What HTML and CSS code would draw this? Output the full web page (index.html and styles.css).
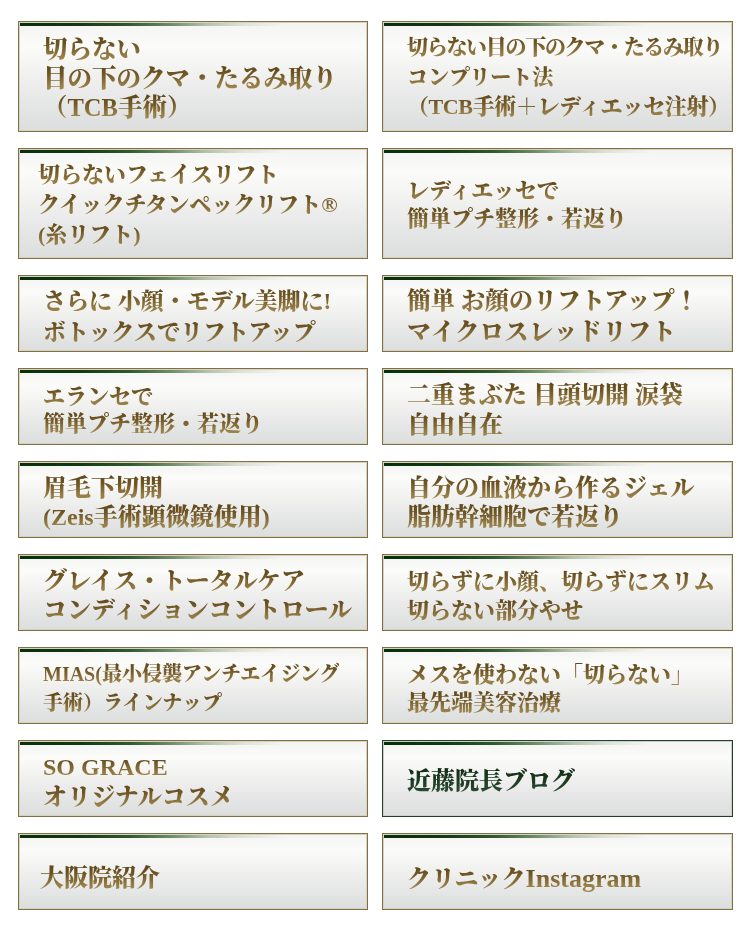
FILE: index.html
```html
<!DOCTYPE html>
<html lang="ja">
<head>
<meta charset="utf-8">
<title>メニュー</title>
<link rel="stylesheet" href="styles.css">
</head>
<body>
<div class="menu">
  <a class="btn tall" href="#"><span class="label s245">切らない<br>目の下のクマ・たるみ取り<br>（TCB手術）</span></a>
  <a class="btn tall" href="#"><span class="label s21 lh295"><span class="tight">切らない目の下のクマ・たるみ取り</span><br>コンプリート法<br><span class="squeeze">（TCB手術＋レディエッセ注射）</span></span></a>

  <a class="btn tall pad-s" href="#"><span class="label s22 lh30">切らないフェイスリフト<br>クイックチタンペックリフト®<br>(糸リフト)</span></a>
  <a class="btn tall" href="#"><span class="label s22 lh28">レディエッセで<br>簡単プチ整形・若返り</span></a>

  <a class="btn" href="#"><span class="label s23 lh31">さらに 小顔・モデル美脚に!<br>ボトックスでリフトアップ</span></a>
  <a class="btn" href="#"><span class="label lh31">簡単 お顔のリフトアップ！<br><span class="wide">マイクロスレッドリフト</span></span></a>

  <a class="btn" href="#"><span class="label s22 lh27">エランセで<br>簡単プチ整形・若返り</span></a>
  <a class="btn" href="#"><span class="label lh30">二重まぶた 目頭切開 涙袋<br>自由自在</span></a>

  <a class="btn" href="#"><span class="label">眉毛下切開<br>(Zeis手術顕微鏡使用)</span></a>
  <a class="btn" href="#"><span class="label">自分の血液から作るジェル<br>脂肪幹細胞で若返り</span></a>

  <a class="btn" href="#"><span class="label">グレイス・トータルケア<br>コンディションコントロール</span></a>
  <a class="btn" href="#"><span class="label s22">切らずに小顔、切らずにスリム<br>切らない部分やせ</span></a>

  <a class="btn" href="#"><span class="label s20">MIAS(最小侵襲アンチエイジング<br>手術）ラインナップ</span></a>
  <a class="btn" href="#"><span class="label s22 lh28">メスを使わない「切らない」<br>最先端美容治療</span></a>

  <a class="btn" href="#"><span class="label lh30">SO GRACE<br>オリジナルコスメ</span></a>
  <a class="btn blog" href="#"><span class="label">近藤院長ブログ</span></a>

  <a class="btn pad-m low" href="#"><span class="label">大阪院紹介</span></a>
  <a class="btn low" href="#"><span class="label">クリニック<span class="latin">Instagram</span></span></a>
</div>
</body>
</html>
```

FILE: styles.css
```css
html, body {
  margin: 0;
  padding: 0;
  background: #ffffff;
}

.menu {
  display: grid;
  grid-template-columns: 350px 351px;
  grid-template-rows: 111px 111px repeat(7, 77px);
  column-gap: 14px;
  row-gap: 16px;
  padding: 21px 0 0 18px;
}

.btn {
  box-sizing: border-box;
  display: flex;
  align-items: center;
  padding: 7px 0 0 24px;
  text-decoration: none;
  border: 1px solid #7f6f4a;
  box-shadow: inset 0 0 0 1px #d9d2bb;
  background:
    linear-gradient(to right, #06300b 0%, #0f3a13 18%, #2f5a31 32%, #6f8e6b 44%, #b3c2ae 54%, #dde2d8 64%, rgba(240,240,236,0) 76%) top left / 100% 5px no-repeat,
    linear-gradient(to bottom, #f3f3f1 0%, #fbfbfa 22%, #f0f0ef 50%, #e4e5e5 78%, #dcdddd 100%);
  background-origin: border-box;
  font-family: "Liberation Serif", "Noto Serif CJK JP", "Noto Sans CJK JP", serif;
  font-weight: 900;
  font-size: 24px;
  line-height: 29px;
}

.tall { padding-top: 3px; }
.low { padding-top: 14px; }
.blog { padding-top: 5px; }

.pad-s { padding-left: 19px; }
.pad-m { padding-left: 21px; }

.label {
  display: block;
  white-space: nowrap;
  color: #7a6230;
  background: linear-gradient(to bottom, #5b4418 0%, #6f5624 35%, #947b44 70%, #a68f58 100%);
  background-size: 100% 1lh;
  background-repeat: repeat-y;
  -webkit-background-clip: text;
  background-clip: text;
  -webkit-text-fill-color: transparent;
}

.blog {
  border-color: #24402a;
  box-shadow: inset 0 0 0 1px #c9d0c9;
}

.blog .label {
  color: #1f3a24;
  background: linear-gradient(to bottom, #0f2a14 0%, #1d3b22 50%, #34503a 100%);
  background-size: 100% 1lh;
  -webkit-background-clip: text;
  background-clip: text;
}

.s20 { font-size: 20px; }
.s21 { font-size: 21px; }
.s22 { font-size: 22px; }
.s23 { font-size: 23px; }
.s245 { font-size: 24.5px; }
.lh27 { line-height: 27px; }
.lh28 { line-height: 28px; }
.lh295 { line-height: 29.5px; }
.lh30 { line-height: 30px; }
.lh31 { line-height: 31px; }
.wide { letter-spacing: 0.6px; }
.tight { letter-spacing: -1.3px; }

.squeeze {
  font-size: 22px;
  letter-spacing: -0.4px;
}

.latin { font-size: 26px; }
```
